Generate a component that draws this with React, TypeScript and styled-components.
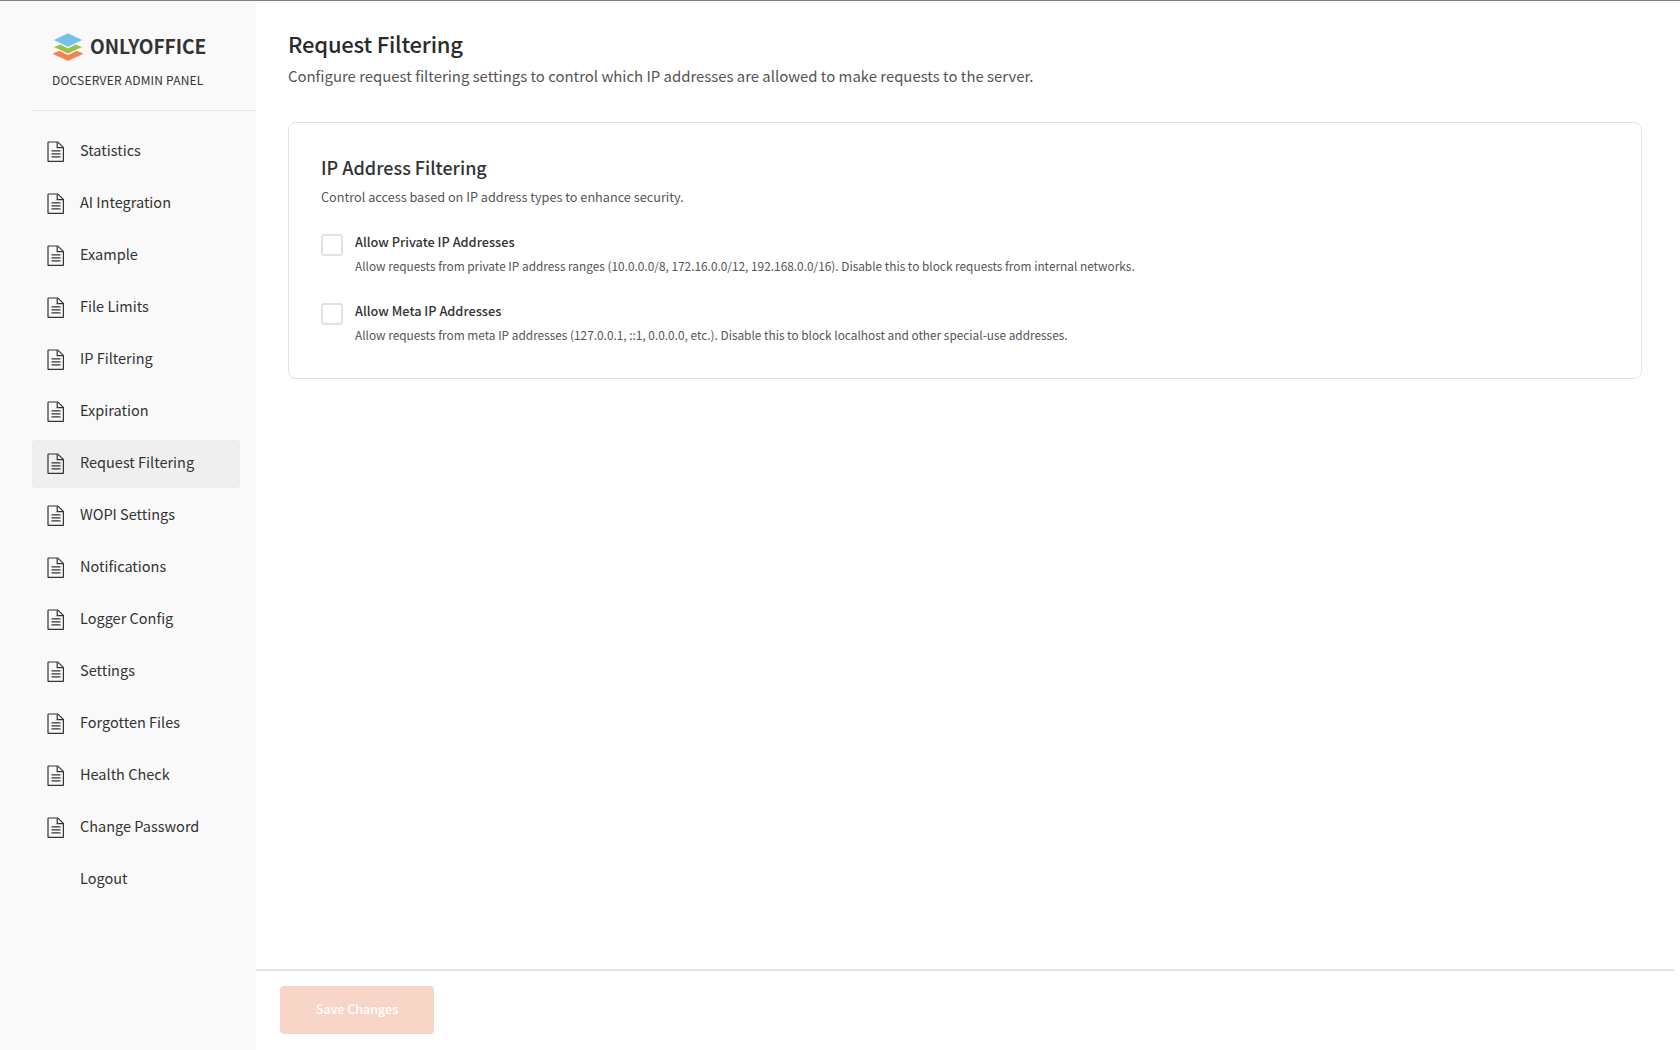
import styled, { createGlobalStyle } from 'styled-components';

const GlobalStyle = createGlobalStyle`
  html, body {
    margin: 0;
    padding: 0;
    height: 100%;
    background: #fff;
  }
  * {
    box-sizing: border-box;
  }
  body {
    font-family: "Noto Sans CJK KR", "Noto Sans", sans-serif;
    color: #333;
  }
`;

const Shell = styled.div`
  display: flex;
  height: 1050px;
  border-top: 1px solid #808080;
  overflow: hidden;
`;

const Sidebar = styled.aside`
  width: 256px;
  flex-shrink: 0;
  background: #f9f9f9;
  padding-left: 32px;
`;

const Brand = styled.div`
  height: 110px;
  border-bottom: 1px solid #e2e2e2;
  padding: 31px 0 0 20px;
`;

const LogoRow = styled.div`
  display: flex;
  align-items: center;
  gap: 6px;
`;

const LogoName = styled.span`
  padding-bottom: 2px;
  font-size: 19.2px;
  font-weight: 700;
  line-height: 28px;
  letter-spacing: -0.1px;
  color: #333;
`;

const PanelName = styled.div`
  margin-top: 10px;
  font-size: 12px;
  line-height: 16px;
  letter-spacing: 0.2px;
  color: #333;
`;

const Nav = styled.nav`
  display: flex;
  flex-direction: column;
  gap: 4px;
  width: 208px;
  margin-top: 17px;
`;

const NavItem = styled.a<{ $active?: boolean }>`
  display: flex;
  align-items: center;
  height: 48px;
  padding: 0 0 5px 12px;
  gap: 12px;
  border-radius: 4px;
  background: ${(p) => (p.$active ? '#efefef' : 'transparent')};
  font-size: 14.5px;
  color: #333;
`;

const IconSlot = styled.span`
  display: flex;
  width: 24px;
  height: 24px;
  flex-shrink: 0;
`;

const Main = styled.main`
  flex: 1;
  display: flex;
  flex-direction: column;
  margin-right: 6px;
  min-width: 0;
`;

const Content = styled.div`
  flex: 1;
  padding: 26px 32px 0;
`;

const Title = styled.h1`
  margin: 0;
  font-size: 22px;
  font-weight: 500;
  line-height: 33px;
  letter-spacing: -0.2px;
  color: #2b2b2b;
`;

const Subtitle = styled.p`
  margin: 5px 0 0;
  font-size: 14.9px;
  line-height: 22px;
  color: #555;
`;

const Card = styled.section`
  margin-top: 35px;
  height: 257px;
  padding: 31px 32px;
  border: 1px solid #e2e2e2;
  border-radius: 8px;
`;

const CardTitle = styled.h2`
  margin: 0;
  font-size: 18px;
  font-weight: 500;
  line-height: 26px;
  color: #333;
`;

const CardText = styled.p`
  margin: 8px 0 0;
  font-size: 12.7px;
  line-height: 18px;
  color: #555;
`;

const Options = styled.div`
  display: flex;
  flex-direction: column;
  gap: 28px;
  margin-top: 27px;
`;

const Option = styled.label`
  display: flex;
  gap: 12px;
`;

const Box = styled.span`
  width: 22px;
  height: 22px;
  margin-top: 1px;
  flex-shrink: 0;
  border: 2px solid #e2e2e2;
  border-radius: 3px;
  background: #fff;
`;

const OptionBody = styled.div`
  display: flex;
  flex-direction: column;
  gap: 7px;
`;

const OptionLabel = styled.span`
  font-size: 12.75px;
  font-weight: 500;
  line-height: 18px;
  color: #333;
`;

const OptionHint = styled.span`
  font-size: 11.85px;
  line-height: 16px;
  color: #555;
`;

const Footer = styled.footer`
  height: 81px;
  flex-shrink: 0;
  padding: 15px 24px;
  border-top: 2px solid #e2e2e2;
`;

const SaveButton = styled.button`
  width: 154px;
  height: 48px;
  padding: 0 0 3px;
  border: none;
  border-radius: 4px;
  background: #f7d6c8;
  color: #fff;
  font-family: inherit;
  font-size: 12.5px;
  font-weight: 500;
`;

const items = [
  'Statistics',
  'AI Integration',
  'Example',
  'File Limits',
  'IP Filtering',
  'Expiration',
  'Request Filtering',
  'WOPI Settings',
  'Notifications',
  'Logger Config',
  'Settings',
  'Forgotten Files',
  'Health Check',
  'Change Password',
];

const DocIcon = () => (
  <svg width="24" height="24" viewBox="0 0 24 24" fill="none" stroke="#333" strokeWidth="1.2">
    <path d="M4.6 4h9.2l5.6 5.4v13.4a.6.6 0 0 1-.6.6H4.6a.6.6 0 0 1-.6-.6V4.6a.6.6 0 0 1 .6-.6z" />
    <path d="M13.2 4.2v5.4h6" />
    <path d="M7.5 12.9h9M7.5 15.9h9M7.5 18.9h9" />
  </svg>
);

const Logo = () => (
  <svg width="32" height="30" viewBox="0 0 32 30">
    <path d="M16 15.5 31 21.8 16 28.6 1 21.8z" fill="#f47f4f" stroke="#f47f4f" strokeWidth="0.6" strokeLinejoin="round" />
    <path d="M16 8.5 31.4 15 16 22.4 0.6 15z" fill="#9cc145" stroke="#f9f9f9" strokeWidth="1.2" strokeLinejoin="round" />
    <path d="M16 0.6 31.4 8 16 15.6 0.6 8z" fill="#75c1e8" stroke="#f9f9f9" strokeWidth="1.2" strokeLinejoin="round" />
  </svg>
);

const App = () => {
  return (
    <>
      <GlobalStyle />
      <Shell>
        <Sidebar>
          <Brand>
            <LogoRow>
              <Logo />
              <LogoName>ONLYOFFICE</LogoName>
            </LogoRow>
            <PanelName>DOCSERVER ADMIN PANEL</PanelName>
          </Brand>
          <Nav>
            {items.map((item) => (
              <NavItem key={item} $active={item === 'Request Filtering'}>
                <IconSlot>
                  <DocIcon />
                </IconSlot>
                {item}
              </NavItem>
            ))}
            <NavItem>
              <IconSlot />
              Logout
            </NavItem>
          </Nav>
        </Sidebar>
        <Main>
          <Content>
            <Title>Request Filtering</Title>
            <Subtitle>
              Configure request filtering settings to control which IP addresses are allowed to make requests to the server.
            </Subtitle>
            <Card>
              <CardTitle>IP Address Filtering</CardTitle>
              <CardText>Control access based on IP address types to enhance security.</CardText>
              <Options>
                <Option>
                  <Box />
                  <OptionBody>
                    <OptionLabel>Allow Private IP Addresses</OptionLabel>
                    <OptionHint>
                      Allow requests from private IP address ranges (10.0.0.0/8, 172.16.0.0/12, 192.168.0.0/16). Disable this to block requests from internal networks.
                    </OptionHint>
                  </OptionBody>
                </Option>
                <Option>
                  <Box />
                  <OptionBody>
                    <OptionLabel>Allow Meta IP Addresses</OptionLabel>
                    <OptionHint>
                      Allow requests from meta IP addresses (127.0.0.1, ::1, 0.0.0.0, etc.). Disable this to block localhost and other special-use addresses.
                    </OptionHint>
                  </OptionBody>
                </Option>
              </Options>
            </Card>
          </Content>
          <Footer>
            <SaveButton disabled>Save Changes</SaveButton>
          </Footer>
        </Main>
      </Shell>
    </>
  );
};

export default App;
